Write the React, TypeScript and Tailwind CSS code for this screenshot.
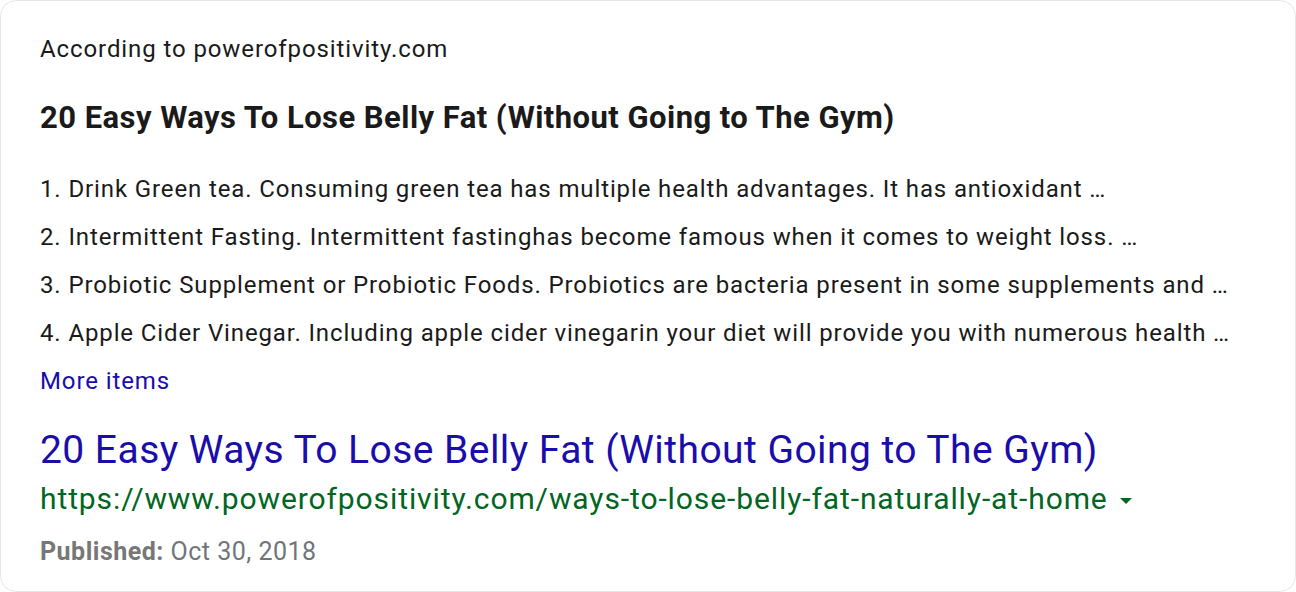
const items = [
  "1. Drink Green tea. Consuming green tea has multiple health advantages. It has antioxidant …",
  "2. Intermittent Fasting. Intermittent fastinghas become famous when it comes to weight loss. …",
  "3. Probiotic Supplement or Probiotic Foods. Probiotics are bacteria present in some supplements and …",
  "4. Apple Cider Vinegar. Including apple cider vinegarin your diet will provide you with numerous health …",
];

export default function App() {
  return (
    <div className="h-[592px] w-[1296px] bg-white font-['Roboto',sans-serif]">
      <div className="flex h-full flex-col rounded-2xl border border-[#e6e6e6] px-[39px] pt-[32px]">
        <div className="text-[24px] leading-[32px] tracking-[0.9px] text-[#1a1a1a]">
          According to powerofpositivity.com
        </div>

        <h2 className="mt-[33px] text-[31px] font-bold leading-[40px] tracking-[0.45px] text-[#1a1a1a]">
          20 Easy Ways To Lose Belly Fat (Without Going to The Gym)
        </h2>

        <ul className="mt-[27px] flex flex-col">
          {items.map((t) => (
            <li
              key={t}
              className="whitespace-nowrap text-[24px] leading-[48px] tracking-[0.88px] text-[#1a1a1a]"
            >
              {t}
            </li>
          ))}
        </ul>

        <a className="text-[24px] leading-[48px] tracking-[0.9px] text-[#1a0dab]">More items</a>

        <a className="mt-[21px] text-[39px] leading-[48px] tracking-[0.45px] text-[#1a0dab]">
          20 Easy Ways To Lose Belly Fat (Without Going to The Gym)
        </a>
        <div className="mt-[5px] flex items-center text-[30px] leading-[40px] tracking-[0.9px] text-[#006621]">
          <span>https://www.powerofpositivity.com/ways-to-lose-belly-fat-naturally-at-home</span>
          <svg width="12" height="7" viewBox="0 0 12 7" className="ml-[12px] mt-[4px]">
            <path d="M0 0h12L6 6z" fill="#006621" />
          </svg>
        </div>
        <div className="mt-[17px] text-[25px] leading-[32px] tracking-[0.5px] text-[#70757a]">
          <span className="font-bold text-[#777]">Published:</span> Oct 30, 2018
        </div>
      </div>
    </div>
  );
}
